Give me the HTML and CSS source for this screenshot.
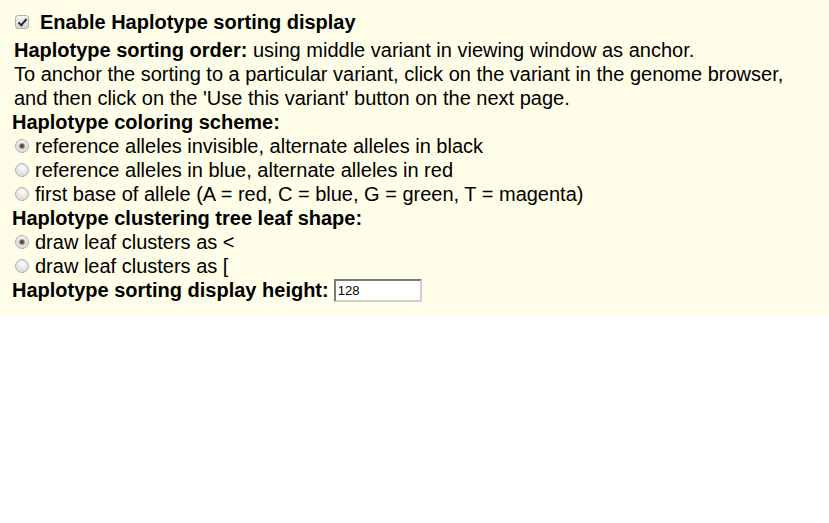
FILE: index.html
```html
<!DOCTYPE html>
<html>
<head>
<meta charset="utf-8">
<link rel="stylesheet" href="styles.css">
</head>
<body>
<div class="panel">
  <div class="enable-row">
    <span class="checkbox checked"></span>
    <span class="enable-label">Enable Haplotype sorting display</span>
  </div>
  <div class="block order">
    <b>Haplotype sorting order:</b> using middle variant in viewing window as anchor.<br>
    To anchor the sorting to a particular variant, click on the variant in the genome browser,<br>
    and then click on the 'Use this variant' button on the next page.
  </div>
  <div class="block section">
    <div class="heading">Haplotype coloring scheme:</div>
    <div class="option"><span class="radio checked"></span>reference alleles invisible, alternate alleles in black</div>
    <div class="option"><span class="radio"></span>reference alleles in blue, alternate alleles in red</div>
    <div class="option"><span class="radio"></span>first base of allele (A = red, C = blue, G = green, T = magenta)</div>
    <div class="heading">Haplotype clustering tree leaf shape:</div>
    <div class="option"><span class="radio checked"></span>draw leaf clusters as &lt;</div>
    <div class="option"><span class="radio"></span>draw leaf clusters as [</div>
    <div class="heading height-row">Haplotype sorting display height: <span class="textbox">128</span></div>
  </div>
</div>
</body>
</html>
```

FILE: styles.css
```css
html, body {
  margin: 0;
  padding: 0;
  background: #ffffff;
}

body {
  font-family: "Liberation Sans", Arial, sans-serif;
  font-size: 20px;
  color: #000;
}

.panel {
  background: #fffee8;
  height: 316px;
  padding-top: 10px;
  box-sizing: border-box;
}

.enable-row {
  display: flex;
  align-items: center;
  height: 24px;
  padding-left: 15px;
}

.enable-label {
  font-weight: bold;
  font-size: 20px;
  margin-left: 11px;
}

.checkbox {
  width: 14px;
  height: 14px;
  box-sizing: border-box;
  border: 1px solid #b0b0b0;
  border-radius: 3px;
  background: linear-gradient(#f6f6f6, #d6d6d6);
  position: relative;
  display: inline-block;
  flex: none;
}

.checkbox.checked::after {
  content: "";
  position: absolute;
  left: 4px;
  top: 1px;
  width: 3px;
  height: 7px;
  border-right: 2px solid #2e2e2e;
  border-bottom: 2px solid #2e2e2e;
  transform: rotate(40deg);
}

.block {
  line-height: 24px;
}

.order {
  margin-top: 4px;
  padding-left: 14px;
}

.section {
  padding-left: 12px;
}

.heading {
  font-weight: bold;
}

.option {
  display: flex;
  align-items: center;
  padding-left: 3px;
}

.radio {
  width: 14px;
  height: 14px;
  box-sizing: border-box;
  border-radius: 50%;
  border: 1px solid #b0b0b0;
  background: radial-gradient(circle at 50% 35%, #fbfbfb, #d2d2d2);
  margin-right: 6px;
  position: relative;
  flex: none;
}

.radio.checked::after {
  content: "";
  position: absolute;
  left: 4px;
  top: 4px;
  width: 4px;
  height: 4px;
  border-radius: 50%;
  background: #4a4a4a;
  box-shadow: 0 0 1px 1px rgba(60, 60, 60, 0.5);
}

.height-row {
  display: flex;
  align-items: center;
}

.textbox {
  display: inline-block;
  width: 88px;
  height: 23px;
  box-sizing: border-box;
  margin-left: 5px;
  border-top: 2px solid #7a7a7a;
  border-left: 2px solid #7a7a7a;
  border-right: 2px solid #cfcfcf;
  border-bottom: 2px solid #cfcfcf;
  background: #fff;
  font-weight: normal;
  font-size: 13px;
  line-height: 19px;
  padding-left: 2px;
}
```
